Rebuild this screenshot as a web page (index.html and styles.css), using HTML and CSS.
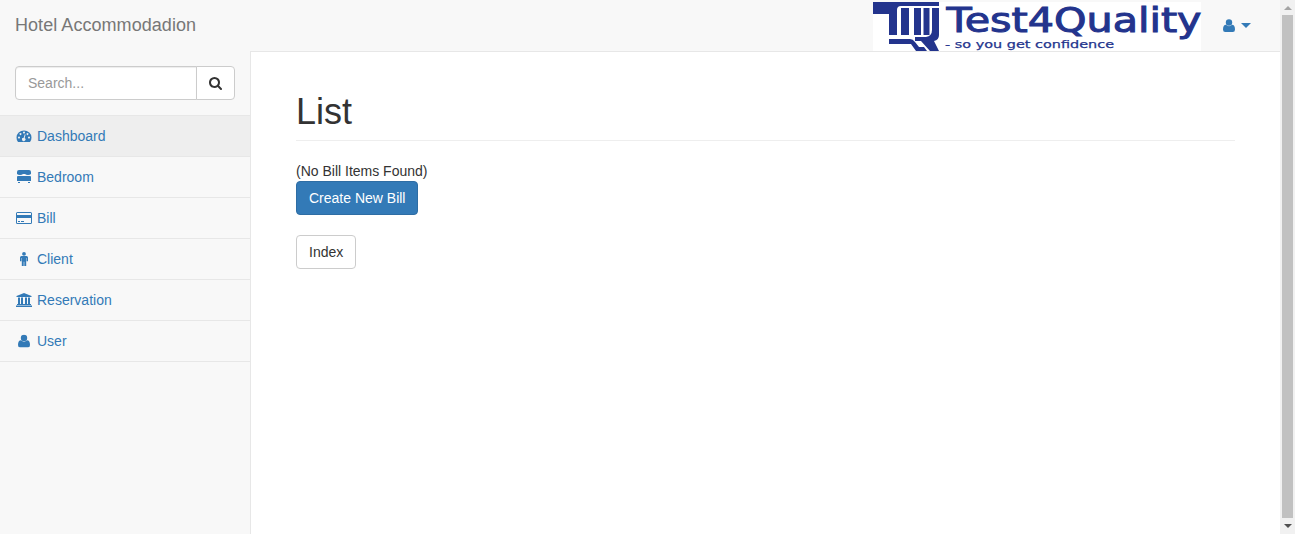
FILE: index.html
```html
<!DOCTYPE html>
<html lang="en">
<head>
<meta charset="utf-8">
<title>Hotel Accommodadion</title>
<link rel="stylesheet" href="styles.css">
</head>
<body>
<svg class="defs" aria-hidden="true">
  <symbol id="user" viewBox="0 0 12 13"><circle cx="6" cy="3.500" r="3.200"/><path d="M3 5.800Q6 8.600 9 5.800Q12 6 12 10.500Q12 13 9.800 13H2.200Q0 13 0 10.500Q0 6 3 5.800Z"/></symbol>
</svg>
<div class="page">
  <div class="main">
    <header class="navbar">
      <a class="brand">Hotel Accommodadion</a>
      <svg class="logo" viewBox="0 0 328 49" role="img">
        <rect width="328" height="49" fill="#fff"/>
        <g fill="#23348d">
          <path d="M0 0H66V4H28Q24 4 24 8V33H16V12H0Z"/>
          <path d="M28 6H36V33H28ZM41 6H48V33H41Z"/>
          <path d="M59 6H66V33Q66 38 61 39L66 49H57L48 39H42V35H53Q59 34 59 28ZM50.500 6H56.500V33H50.500Z"/>
          <path d="M16 37H37Q40 37 42 40L46 45H51L54 49H43L38 42H16Z"/>
          <text class="logo-name" x="73.500" y="30" textLength="255" lengthAdjust="spacingAndGlyphs">Test4Quality</text>
          <text class="logo-tag" x="72" y="46" textLength="169" lengthAdjust="spacingAndGlyphs">- so you get confidence</text>
        </g>
      </svg>
      <a class="account"><svg class="person" viewBox="0 0 12 13"><use href="#user"/></svg><i class="caret"></i></a>
    </header>
    <div class="columns">
      <nav class="sidebar">
        <div class="search">
          <input class="field" type="text" placeholder="Search...">
          <button class="go"><svg width="13" height="13" viewBox="0 0 1664 1664"><path fill="#333" d="M1152 704q0-185-131.500-316.500t-316.500-131.500-316.500 131.500-131.500 316.500 131.500 316.500 316.500 131.500 316.500-131.500 131.500-316.500zM1664 1536q0 52-38 90t-90 38q-54 0-90-38l-343-342q-179 124-399 124-143 0-273.500-55.500t-225-150-150-225-55.500-273.500 55.500-273.500 150-225 225-150 273.500-55.500 273.500 55.500 225 150 150 225 55.500 273.500q0 220-124 399l343 343q37 37 37 90z"/></svg></button>
        </div>
        <a class="item active"><svg class="icon" viewBox="0 0 18 14"><path fill-rule="evenodd" d="M3 13Q1.500 11.500 1.500 8.500A7.500 7 0 0 1 16.500 8.500Q16.500 11.500 15 13ZM4 7.600a1 1 0 1 0 .01 0ZM5.500 4a1 1 0 1 0 .01 0ZM9 2.500a1 1 0 1 0 .01 0ZM12.500 4a1 1 0 1 0 .01 0ZM14 7.600a1 1 0 1 0 .01 0ZM9.800 5.200L8.700 8.700A1.700 1.700 0 1 0 9.700 9L10.600 5.500Z"/></svg>Dashboard</a>
        <a class="item"><svg class="icon" viewBox="0 0 18 14"><path d="M2 4V2Q2 0 4 0H14Q16 0 16 2V4Q15 5 13 5Q11 5 10 4H8Q7 5 5 5Q3 5 2 4ZM2 7Q2 6 3 6H15Q16 6 16 7V11H2ZM3 12H5V13H3ZM13 12H15V13H13Z"/></svg>Bedroom</a>
        <a class="item"><svg class="icon" viewBox="0 0 18 14"><path fill-rule="evenodd" d="M2.500 1H15.500Q17 1 17 2.500V11.500Q17 13 15.500 13H2.500Q1 13 1 11.500V2.500Q1 1 2.500 1ZM2 2V4H16V2ZM2 7V12H16V7ZM3 10H5V11H3ZM6 10H9V11H6Z"/></svg>Bill</a>
        <a class="item"><svg class="icon" viewBox="0 0 18 14"><circle cx="9" cy="1.900" r="1.900"/><path d="M6.500 4H11.500Q13 4 13 5.500V9.200H11.600V6H11.200V14H9.300V9.700H8.700V14H6.800V6H6.400V9.200H5V5.500Q5 4 6.500 4Z"/></svg>Client</a>
        <a class="item"><svg class="icon" viewBox="0 0 18 14"><path d="M9 0L16.500 3V4H1.500V3ZM3 4.500H5V11H6V4.500H8V11H10V4.500H12V11H13V4.500H15V11H16V12H2V11H3ZM1 12.500H17V14H1Z"/></svg>Reservation</a>
        <a class="item"><svg class="icon" viewBox="-3 -.5 18 14"><use href="#user" width="12" height="13"/></svg>User</a>
      </nav>
      <main class="content">
        <h1 class="title">List</h1>
        <div class="empty">(No Bill Items Found)</div>
        <a class="btn primary">Create New Bill</a>
        <a class="btn index">Index</a>
      </main>
    </div>
  </div>
  <div class="scroll"><i class="up"></i><div class="thumb"></div><i class="down"></i></div>
</div>
</body>
</html>
```
FILE: styles.css
```css
* { box-sizing: border-box; }
body { margin: 0; font: 14px/20px "Liberation Sans", Arial, sans-serif; color: #333; background: #f8f8f8; overflow: hidden; }
.defs { display: none; }
.page { display: flex; height: 534px; }
.main { flex: 1; display: flex; flex-direction: column; }
.navbar { height: 51px; display: flex; align-items: flex-start; padding: 0 29px 0 15px; }
.brand { font-size: 18px; line-height: 20px; padding-top: 15px; color: #777; margin-right: auto; letter-spacing: .05px; }
.logo { width: 328px; height: 49px; margin-top: 2px; overflow: visible; }
.logo-name { font: 33px/1 "DejaVu Sans", sans-serif; stroke: #23348d; stroke-width: 1px; }
.logo-tag { font: 11px/1 "DejaVu Sans", sans-serif; stroke: #23348d; stroke-width: .25px; }
.account { display: flex; align-items: center; height: 50px; margin-left: 22px; }
.person { width: 12px; height: 13px; fill: #337ab7; }
.caret { margin-left: 6px; border: 5px solid transparent; border-top: 5px solid #337ab7; border-bottom: 0; }
.columns { flex: 1; display: flex; }
.sidebar { width: 250px; }
.search { display: flex; padding: 15px; height: 65px; border-bottom: 1px solid #e7e7e7; }
.field { width: 182px; height: 34px; padding: 6px 12px; border: 1px solid #ccc; border-radius: 4px 0 0 4px; font: inherit; box-shadow: inset 0 1px 1px rgba(0,0,0,.075); }
.field::placeholder { color: #999; }
.go { width: 39px; height: 34px; margin-left: -1px; padding: 0; border: 1px solid #ccc; border-radius: 0 4px 4px 0; background: #fff; display: flex; align-items: center; justify-content: center; }
.item { display: flex; align-items: center; height: 41px; padding-left: 15px; border-bottom: 1px solid #e7e7e7; color: #337ab7; }
.active { background: #eee; }
.icon { width: 18px; height: 14px; margin-right: 4px; fill: #337ab7; }
.content { flex: 1; padding: 40px 45px 0; background: #fff; border-left: 1px solid #e7e7e7; border-top: 1px solid #e7e7e7; display: flex; flex-direction: column; align-items: flex-start; }
.title { width: 100%; height: 49px; margin: 0 0 20px; font-size: 36px; font-weight: 500; line-height: 39px; border-bottom: 1px solid #eee; }
.btn { height: 34px; padding: 6px 12px; border: 1px solid #ccc; border-radius: 4px; background: #fff; }
.primary { color: #fff; background: #337ab7; border-color: #2e6da4; }
.index { margin-top: 20px; }
.scroll { width: 15px; background: #f1f1f1; display: flex; flex-direction: column; align-items: center; }
.thumb { width: 11px; height: 503px; background: #c1c1c1; }
.up { height: 4px; margin: 6px 0 5px; border: 4px solid transparent; border-top: 0; border-bottom-color: #a3a3a3; }
.down { margin-top: 6px; border: 4px solid transparent; border-bottom: 0; border-top-color: #505050; }
```
